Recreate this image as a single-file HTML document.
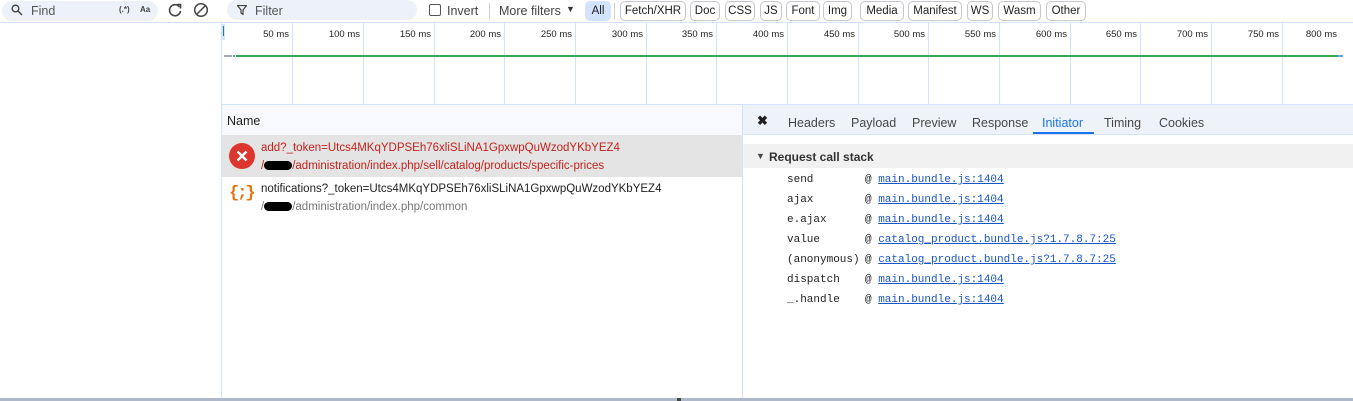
<!DOCTYPE html>
<html><head><meta charset="utf-8"><style>
*{box-sizing:border-box;margin:0;padding:0}
body{width:1353px;height:401px;overflow:hidden;background:#fff;font-family:"Liberation Sans",sans-serif;font-size:12px;color:#1f1f1f;position:relative}
.a{position:absolute}
.chip{position:absolute;top:1px;height:20px;border:1px solid #c4c7cc;border-radius:5px;font-size:11.5px;line-height:18px;text-align:center;background:#fff;color:#1f1f1f}
.gl{position:absolute;top:23px;width:1px;height:81px;background:#d3e3fd}
.lbl{position:absolute;top:29px;font-size:9.5px;text-align:right;width:60px}
.tab{position:absolute;top:116px;font-size:12.5px;color:#474747}
.mono{font-family:"Liberation Mono",monospace;font-size:11px;position:absolute;color:#1f1f1f}
.lnk{color:#1a55c7;text-decoration:underline}
.rt{position:absolute;left:261px;font-size:11.5px}
</style></head><body>
<div class="a" style="left:0;top:0;width:1353px;height:23px;border-bottom:1px solid #d3e3fd"></div>
<div class="a" style="left:2px;top:1px;width:156px;height:20px;background:#edf2fa;border-radius:10px"></div>
<svg class="a" style="left:11px;top:4px" width="12" height="12" viewBox="0 0 12 12"><circle cx="4.5" cy="4.5" r="3.3" fill="none" stroke="#444" stroke-width="1.4"/><path d="M7 7l4 4" stroke="#444" stroke-width="1.5"/></svg>
<div class="a" style="left:31px;top:4px;font-size:12.5px;color:#555">Find</div>
<div class="a" style="left:119px;top:5px;font-size:8px;font-weight:bold;color:#444">(.*)</div>
<div class="a" style="left:140px;top:5px;font-size:8px;font-weight:bold;color:#444">Aa</div>
<svg class="a" style="left:167px;top:2px" width="16" height="16" viewBox="0 0 16 16"><path d="M12.5 5A5.5 5.5 0 1 0 13.5 9" fill="none" stroke="#444" stroke-width="1.6"/><path d="M9.5 2.5h4v4" fill="none" stroke="#444" stroke-width="1.6"/></svg>
<svg class="a" style="left:193px;top:2px" width="16" height="16" viewBox="0 0 16 16"><circle cx="8" cy="8" r="6.3" fill="none" stroke="#444" stroke-width="1.5"/><path d="M3.5 12.5l9-9" stroke="#444" stroke-width="1.5"/></svg>
<div class="a" style="left:227px;top:0px;width:190px;height:20px;background:#edf2fa;border-radius:10px"></div>
<svg class="a" style="left:237px;top:5px" width="10" height="10" viewBox="0 0 10 10"><path d="M0.5 0.5h9L6 5v4.5L4 8V5z" fill="none" stroke="#444" stroke-width="1.2"/></svg>
<div class="a" style="left:255px;top:4px;font-size:12.5px;color:#555">Filter</div>
<div class="a" style="left:429px;top:4px;width:12px;height:12px;border:1px solid #555;border-radius:2px"></div>
<div class="a" style="left:447px;top:4px;font-size:12.5px;color:#444">Invert</div>
<div class="a" style="left:489px;top:3px;width:1px;height:16px;background:#d0d0d0"></div>
<div class="a" style="left:499px;top:4px;font-size:12.5px;color:#444">More filters</div>
<div class="a" style="left:566px;top:4px;font-size:9px;color:#333">▼</div>
<div class="a" style="left:585px;top:1px;width:26px;height:20px;background:#d3e3fd;border-radius:5px;font-size:11.5px;line-height:20px;text-align:center">All</div>
<div class="a" style="left:614px;top:3px;width:1px;height:16px;background:#d0d0d0"></div>
<div class="chip" style="left:620px;width:66px">Fetch/XHR</div>
<div class="chip" style="left:690px;width:30px">Doc</div>
<div class="chip" style="left:725px;width:30px">CSS</div>
<div class="chip" style="left:760px;width:22px">JS</div>
<div class="chip" style="left:786px;width:34px">Font</div>
<div class="chip" style="left:823px;width:29px">Img</div>
<div class="chip" style="left:860px;width:44px">Media</div>
<div class="chip" style="left:908px;width:54px">Manifest</div>
<div class="chip" style="left:967px;width:26px">WS</div>
<div class="chip" style="left:998px;width:43px">Wasm</div>
<div class="chip" style="left:1046px;width:40px">Other</div>
<div class="a" style="left:221px;top:23px;width:1px;height:375px;background:#d3e3fd"></div>
<div class="a" style="left:222px;top:24px;width:3px;height:16px;background:#d3e3fd;border-radius:2px"></div>
<div class="a" style="left:223px;top:26px;width:1px;height:10px;background:#1a73e8"></div>
<div class="gl" style="left:292px"></div><div class="gl" style="left:363px"></div><div class="gl" style="left:434px"></div><div class="gl" style="left:504px"></div><div class="gl" style="left:575px"></div><div class="gl" style="left:646px"></div><div class="gl" style="left:716px"></div><div class="gl" style="left:787px"></div><div class="gl" style="left:858px"></div><div class="gl" style="left:928px"></div><div class="gl" style="left:999px"></div><div class="gl" style="left:1070px"></div><div class="gl" style="left:1140px"></div><div class="gl" style="left:1211px"></div><div class="gl" style="left:1282px"></div>
<div class="lbl" style="left:229px">50 ms</div><div class="lbl" style="left:300px">100 ms</div><div class="lbl" style="left:371px">150 ms</div><div class="lbl" style="left:441px">200 ms</div><div class="lbl" style="left:512px">250 ms</div><div class="lbl" style="left:583px">300 ms</div><div class="lbl" style="left:653px">350 ms</div><div class="lbl" style="left:724px">400 ms</div><div class="lbl" style="left:795px">450 ms</div><div class="lbl" style="left:865px">500 ms</div><div class="lbl" style="left:936px">550 ms</div><div class="lbl" style="left:1007px">600 ms</div><div class="lbl" style="left:1077px">650 ms</div><div class="lbl" style="left:1148px">700 ms</div><div class="lbl" style="left:1219px">750 ms</div><div class="lbl" style="left:1277px">800 ms</div>
<div class="a" style="left:224px;top:55px;width:8px;height:2px;background:#aaa"></div>
<div class="a" style="left:233px;top:55px;width:2px;height:2px;background:#4ab"></div>
<div class="a" style="left:236px;top:55px;width:1102px;height:2px;background:#34a853"></div>
<div class="a" style="left:1338px;top:55px;width:5px;height:2px;background:#669df6"></div>
<div class="a" style="left:222px;top:104px;width:1131px;height:1px;background:#d3e3fd"></div>
<div class="a" style="left:222px;top:105px;width:520px;height:30px;background:#f8f9fe"></div>
<div class="a" style="left:227px;top:114px;font-size:12.5px">Name</div>
<div class="a" style="left:742px;top:105px;width:1px;height:293px;background:#d3e3fd"></div>
<div class="a" style="left:222px;top:135px;width:520px;height:42px;background:#e3e4e3"></div>
<div class="a" style="left:229px;top:143px;width:26px;height:26px;border-radius:50%;background:#dc362e"></div>
<svg class="a" style="left:229px;top:143px" width="26" height="26" viewBox="0 0 26 26"><path d="M8.5 8.5l9 9M17.5 8.5l-9 9" stroke="#fff" stroke-width="2.4"/></svg>
<div class="rt" style="top:142px;color:#c5221f">add?_token=Utcs4MKqYDPSEh76xliSLiNA1GpxwpQuWzodYKbYEZ4</div>
<div class="rt" style="top:160px;color:#c5221f">/<span style="display:inline-block;width:28px;height:9px;background:#000;border-radius:5px;vertical-align:-1px"></span>/administration/index.php/sell/catalog/products/specific-prices</div>
<div class="a" style="left:229px;top:184px;font-size:17px;font-weight:bold;color:#e8710a;font-family:'Liberation Mono',monospace;letter-spacing:-2px">{;}</div>
<div class="rt" style="top:183px">notifications?_token=Utcs4MKqYDPSEh76xliSLiNA1GpxwpQuWzodYKbYEZ4</div>
<div class="rt" style="top:201px;color:#777">/<span style="display:inline-block;width:28px;height:9px;background:#000;border-radius:5px;vertical-align:-1px"></span>/administration/index.php/common</div>
<div class="a" style="left:743px;top:105px;width:610px;height:30px;background:#eef2f9;border-bottom:1px solid #d3e3fd"></div>
<div class="a" style="left:757px;top:113px;font-size:13px;font-weight:bold">✖</div>
<div class="tab" style="left:788px">Headers</div>
<div class="tab" style="left:851px">Payload</div>
<div class="tab" style="left:912px">Preview</div>
<div class="tab" style="left:972px">Response</div>
<div class="tab" style="left:1042px;color:#1a73e8">Initiator</div>
<div class="a" style="left:1033px;top:132px;width:61px;height:2px;background:#1a73e8"></div>
<div class="tab" style="left:1104px">Timing</div>
<div class="tab" style="left:1159px">Cookies</div>
<div class="a" style="left:743px;top:144px;width:610px;height:24px;background:#f1f1f1"></div>
<div class="a" style="left:756px;top:151px;font-size:9px;color:#444">▼</div>
<div class="a" style="left:769px;top:150px;font-size:12px;font-weight:bold;color:#333">Request call stack</div>
<div class="mono" style="left:787px;top:174px">send</div><div class="mono" style="left:865px;top:174px">@ <span class="lnk">main.bundle.js:1404</span></div>
<div class="mono" style="left:787px;top:194px">ajax</div><div class="mono" style="left:865px;top:194px">@ <span class="lnk">main.bundle.js:1404</span></div>
<div class="mono" style="left:787px;top:214px">e.ajax</div><div class="mono" style="left:865px;top:214px">@ <span class="lnk">main.bundle.js:1404</span></div>
<div class="mono" style="left:787px;top:234px">value</div><div class="mono" style="left:865px;top:234px">@ <span class="lnk">catalog_product.bundle.js?1.7.8.7:25</span></div>
<div class="mono" style="left:787px;top:254px">(anonymous)</div><div class="mono" style="left:865px;top:254px">@ <span class="lnk">catalog_product.bundle.js?1.7.8.7:25</span></div>
<div class="mono" style="left:787px;top:274px">dispatch</div><div class="mono" style="left:865px;top:274px">@ <span class="lnk">main.bundle.js:1404</span></div>
<div class="mono" style="left:787px;top:294px">_.handle</div><div class="mono" style="left:865px;top:294px">@ <span class="lnk">main.bundle.js:1404</span></div>
<div class="a" style="left:0;top:398px;width:1353px;height:3px;background:#aeb8c8"></div>
<div class="a" style="left:677px;top:398px;width:4px;height:3px;background:#444"></div>
</body></html>
